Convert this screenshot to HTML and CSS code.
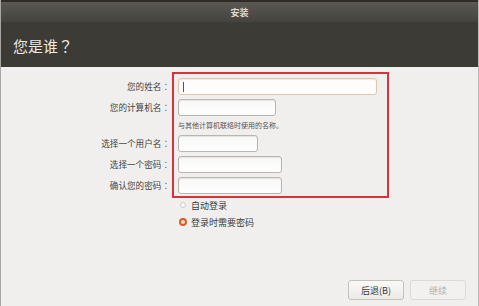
FILE: index.html
```html
<!DOCTYPE html>
<html lang="zh-CN">
<head>
    <meta charset="UTF-8">
    <title>安装</title>
    <link rel="stylesheet" href="styles.css">
</head>
<body>
    <div class="window">
        <div class="titlebar">安装</div>
        <div class="header">
            <h1>您是谁<span class="punct" lang="zh-TW">？</span></h1>
        </div>

        <div class="content">
            <div class="form">
                <div class="labels">
                    <div class="row">您的姓名<span class="punct" lang="zh-TW">：</span></div>
                    <div class="row">您的计算机名<span class="punct" lang="zh-TW">：</span></div>
                    <div class="hint-space"></div>
                    <div class="row">选择一个用户名<span class="punct" lang="zh-TW">：</span></div>
                    <div class="row">选择一个密码<span class="punct" lang="zh-TW">：</span></div>
                    <div class="row">确认您的密码<span class="punct" lang="zh-TW">：</span></div>
                </div>
                <div class="fields">
                    <div class="row"><div class="field wide focused"><span class="caret"></span></div></div>
                    <div class="row"><input type="text" class="field host"></div>
                    <div class="hint">与其他计算机联络时使用的名称。</div>
                    <div class="row"><input type="text" class="field user"></div>
                    <div class="row"><input type="password" class="field pass"></div>
                    <div class="row"><input type="password" class="field pass"></div>
                </div>
            </div>

            <div class="options">
                <label class="radio"><span class="dot"></span>自动登录</label>
                <label class="radio"><span class="dot on"></span>登录时需要密码</label>
            </div>
        </div>

        <div class="footer">
            <button class="btn">后退(B)</button>
            <button class="btn" disabled>继续</button>
        </div>
    </div>
</body>
</html>
```

FILE: styles.css
```css
body {
    margin: 0;
    background-color: #f0efed;
    font-family: "Noto Sans CJK SC", "Liberation Sans", sans-serif;
}
.window {
    height: 306px;
    display: flex;
    flex-direction: column;
    border-left: 1px solid #a9a7a2;
    border-right: 1px solid #bdbbb6;
    box-sizing: border-box;
}
.punct {
    font-family: "Noto Sans CJK TC", sans-serif;
}
.titlebar {
    height: 20px;
    border-top: 2px solid #2c2b28;
    background: linear-gradient(#5b5852, #45433e);
    color: #dedad2;
    font-size: 9px;
    font-weight: bold;
    display: flex;
    align-items: center;
    justify-content: center;
}
.header {
    height: 45px;
    background-color: #3d3b36;
    display: flex;
    align-items: center;
    padding-left: 12px;
}
.header h1 {
    margin: 0;
    color: #ebe9e4;
    font-size: 15px;
    font-weight: normal;
    margin-top: 1px;
}
.content {
    flex: 1;
}
.form {
    display: flex;
    margin-top: 5px;
}
.labels {
    width: 171px;
    padding-top: 6px;
    text-align: right;
    color: #444;
    font-size: 8.6px;
}
.labels .row {
    height: 17px;
    line-height: 17px;
    margin-bottom: 4px;
    padding-right: 2px;
}
.hint-space {
    height: 11px;
    margin-bottom: 4px;
}
.fields {
    border: 2px solid #d8333b;
    padding: 4px 10px 2px 4px;
    width: 199px;
}
.fields .row {
    height: 17px;
    margin-bottom: 4px;
}
.fields .row:last-child {
    margin-bottom: 0;
}
.field {
    display: block;
    box-sizing: border-box;
    height: 17px;
    margin: 0;
    border: 1px solid #b9b6b1;
    border-radius: 3px;
    background: linear-gradient(#f7f7f6, #ffffff);
    box-shadow: inset 0 1px 1px rgba(0, 0, 0, 0.08);
    padding: 0 4px;
    font-size: 9px;
}
.wide { width: 199px; }
.host { width: 98px; }
.user { width: 80px; }
.pass { width: 104px; }
.focused {
    border-color: #e2c3ae;
    background: #fffdfb;
    display: flex;
    align-items: center;
}
.caret {
    width: 1px;
    height: 10px;
    background: #555;
}
.hint {
    height: 11px;
    line-height: 11px;
    margin-bottom: 4px;
    font-size: 7px;
    color: #555;
}
.options {
    margin-left: 179px;
    margin-top: 1px;
    display: flex;
    flex-direction: column;
    gap: 5px;
}
.radio {
    display: flex;
    align-items: center;
    font-size: 9px;
    color: #3c3c3c;
    height: 12px;
}
.dot {
    width: 6px;
    height: 6px;
    border: 1px solid #cfccc7;
    border-radius: 50%;
    background: #fbfbfa;
    margin-right: 5px;
    box-sizing: border-box;
}
.dot.on {
    width: 8px;
    height: 8px;
    border: 2px solid #dd5a27;
    background: #fbe3d6;
    margin-left: -1px;
    margin-right: 4px;
}
.footer {
    display: flex;
    justify-content: flex-end;
    gap: 6px;
    padding: 0 12px 6px 0;
}
.btn {
    width: 56px;
    height: 20px;
    border: 1px solid #c4c1bb;
    border-radius: 3px;
    background: linear-gradient(#fafaf9, #ebeae7);
    color: #3a3a3a;
    font-family: "Noto Sans CJK SC", "Liberation Sans", sans-serif;
    font-size: 9px;
    padding: 0;
}
.btn:disabled {
    color: #b3b1ad;
    border-color: #dcdad6;
    background: #f2f1ef;
}
```
